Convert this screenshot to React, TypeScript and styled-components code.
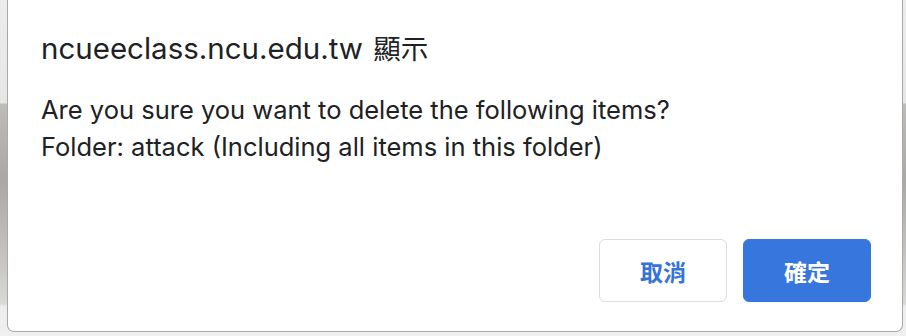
import React from "react";
import styled, { createGlobalStyle } from "styled-components";

const GlobalStyle = createGlobalStyle`
  html, body {
    margin: 0;
    padding: 0;
    width: 906px;
    height: 336px;
    overflow: hidden;
  }
  body {
    font-family: Inter, "Noto Sans CJK TC", "Liberation Sans", sans-serif;
  }
`;

const Backdrop = styled.div`
  width: 906px;
  height: 336px;
  box-sizing: border-box;
  padding: 0 3px 4px 7px;
  background:
    linear-gradient(
      to bottom,
      #ececec 0,
      #e6e6e6 103px,
      #bdbcb8 104px,
      #a9a8a3 180px,
      #c6c5c1 260px,
      #d9d9d7 304px,
      #ededed 306px,
      #f0f0f0 336px
    );
`;

const Dialog = styled.div`
  height: 332px;
  box-sizing: border-box;
  display: flex;
  flex-direction: column;
  background: #ffffff;
  border: 1px solid #a9a9a9;
  border-top: none;
  border-radius: 0 0 7px 7px;
  padding: 31px 31px 29px 33px;
  color: #202124;
  font-family: Inter, "Noto Sans CJK TC", "Liberation Sans", sans-serif;
`;

const Title = styled.div`
  font-size: 29.5px;
  line-height: 34px;
  font-weight: 400;
`;

const HostLabel = styled.span`
  font-size: 27.5px;
  margin-left: 2px;
`;

const Message = styled.div`
  margin-top: 25px;
  font-size: 25.5px;
  line-height: 37px;
  font-weight: 400;
  flex: 1;
`;

const Actions = styled.div`
  display: flex;
  justify-content: flex-end;
  gap: 16px;
`;

const Button = styled.button<{ $primary?: boolean }>`
  width: 128px;
  height: 63px;
  box-sizing: border-box;
  border-radius: 6px;
  font-family: "Noto Sans CJK TC", sans-serif;
  font-size: 23px;
  font-weight: 700;
  cursor: pointer;
  border: 1px solid ${(p) => (p.$primary ? "#3776dd" : "#dadce0")};
  background: ${(p) => (p.$primary ? "#3776dd" : "#ffffff")};
  color: ${(p) => (p.$primary ? "#ffffff" : "#3574d9")};
`;

export default function App() {
  return (
    <>
      <GlobalStyle />
      <Backdrop>
        <Dialog>
          <Title>
            ncueeclass.ncu.edu.tw <HostLabel>顯示</HostLabel>
          </Title>
          <Message>
            Are you sure you want to delete the following items?
            <br />
            Folder: attack (Including all items in this folder)
          </Message>
          <Actions>
            <Button>取消</Button>
            <Button $primary>確定</Button>
          </Actions>
        </Dialog>
      </Backdrop>
    </>
  );
}
